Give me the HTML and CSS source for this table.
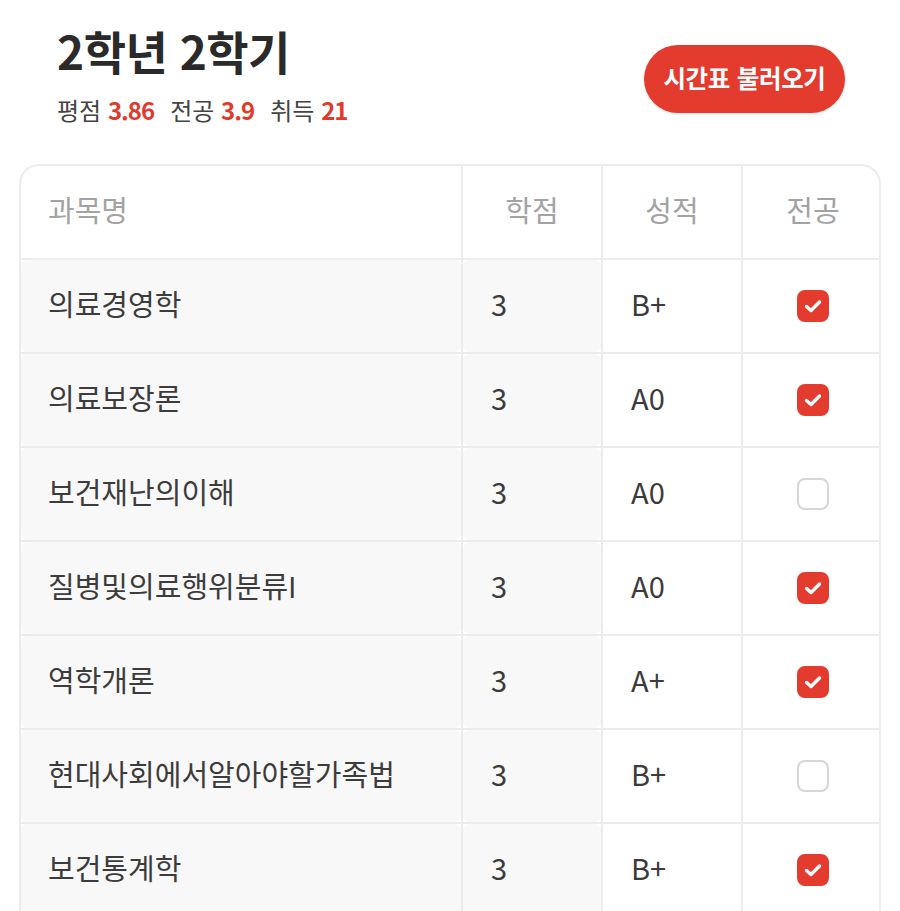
FILE: index.html
```html
<!DOCTYPE html>
<html lang="ko">
<head>
<meta charset="utf-8">
<link rel="stylesheet" href="styles.css">
</head>
<body>
<div class="page">
  <header class="top">
    <div class="summary">
      <h1 class="title">2학년 2학기</h1>
      <div class="stats">
        <span class="stat">평점 <b>3.86</b></span>
        <span class="stat">전공 <b>3.9</b></span>
        <span class="stat">취득 <b>21</b></span>
      </div>
    </div>
    <button class="load-btn">시간표 불러오기</button>
  </header>

  <div class="table">
    <div class="row head">
      <div class="cell name">과목명</div>
      <div class="cell center">학점</div>
      <div class="cell center">성적</div>
      <div class="cell center">전공</div>
    </div>
    <div class="row">
      <div class="cell input"><span class="box">의료경영학</span></div>
      <div class="cell input"><span class="box num">3</span></div>
      <div class="cell grade">B+</div>
      <div class="cell center"><span class="check on"><svg viewBox="0 0 32 32"><polyline points="9.5,16.5 14,20.5 22.5,12"/></svg></span></div>
    </div>
    <div class="row">
      <div class="cell input"><span class="box">의료보장론</span></div>
      <div class="cell input"><span class="box num">3</span></div>
      <div class="cell grade">A0</div>
      <div class="cell center"><span class="check on"><svg viewBox="0 0 32 32"><polyline points="9.5,16.5 14,20.5 22.5,12"/></svg></span></div>
    </div>
    <div class="row">
      <div class="cell input"><span class="box">보건재난의이해</span></div>
      <div class="cell input"><span class="box num">3</span></div>
      <div class="cell grade">A0</div>
      <div class="cell center"><span class="check"></span></div>
    </div>
    <div class="row">
      <div class="cell input"><span class="box">질병및의료행위분류I</span></div>
      <div class="cell input"><span class="box num">3</span></div>
      <div class="cell grade">A0</div>
      <div class="cell center"><span class="check on"><svg viewBox="0 0 32 32"><polyline points="9.5,16.5 14,20.5 22.5,12"/></svg></span></div>
    </div>
    <div class="row">
      <div class="cell input"><span class="box">역학개론</span></div>
      <div class="cell input"><span class="box num">3</span></div>
      <div class="cell grade">A+</div>
      <div class="cell center"><span class="check on"><svg viewBox="0 0 32 32"><polyline points="9.5,16.5 14,20.5 22.5,12"/></svg></span></div>
    </div>
    <div class="row">
      <div class="cell input"><span class="box">현대사회에서알아야할가족법</span></div>
      <div class="cell input"><span class="box num">3</span></div>
      <div class="cell grade">B+</div>
      <div class="cell center"><span class="check"></span></div>
    </div>
    <div class="row">
      <div class="cell input"><span class="box">보건통계학</span></div>
      <div class="cell input"><span class="box num">3</span></div>
      <div class="cell grade">B+</div>
      <div class="cell center"><span class="check on"><svg viewBox="0 0 32 32"><polyline points="9.5,16.5 14,20.5 22.5,12"/></svg></span></div>
    </div>
  </div>
</div>
</body>
</html>
```
FILE: styles.css
```css
html, body {
  margin: 0;
  padding: 0;
  background: #fff;
  height: 911px;
  overflow: hidden;
}
body {
  font-family: "Noto Sans CJK KR", "Noto Sans", sans-serif;
  color: #3c3c3c;
}
.page {
  padding-top: 18px;
}
.top {
  display: flex;
  justify-content: space-between;
  align-items: flex-start;
  padding: 0 55px 0 57px;
  height: 146px;
}
.title {
  margin: 0;
  font-size: 46px;
  font-weight: 700;
  line-height: 64px;
  color: #2a2a2a;
  letter-spacing: -0.5px;
}
.stats {
  margin-top: 11px;
  display: flex;
  gap: 16px;
  font-size: 24px;
  line-height: 34px;
  color: #444;
}
.stat b {
  color: #e03a2d;
  font-weight: 700;
  letter-spacing: -1px;
}
.load-btn {
  margin-top: 27px;
  height: 68px;
  width: 201px;
  border: none;
  border-radius: 34px;
  background: #e33b2d;
  color: #fff;
  font-family: inherit;
  font-size: 24.5px;
  font-weight: 700;
  padding: 0 0 3px;
  letter-spacing: -0.3px;
  box-shadow: 0 1px 3px rgba(0,0,0,0.12);
}
.table {
  margin: 0 19px;
  border: 2px solid #ececec;
  border-bottom: none;
  border-radius: 20px 20px 0 0;
  overflow: hidden;
  background: #ececec;
  display: flex;
  flex-direction: column;
  gap: 2px;
}
.row {
  display: grid;
  grid-template-columns: 440px 138px 138px 140px;
  gap: 2px;
  height: 92px;
}
.cell {
  background: #fff;
  display: flex;
  align-items: center;
  font-size: 29px;
  padding-bottom: 6px;
  box-sizing: border-box;
}
.head .cell {
  color: #a3a3a3;
}
.name {
  padding-left: 27px;
}
.center {
  justify-content: center;
}
.grade {
  padding-left: 28px;
  color: #3c3c3c;
}
.input {
  padding: 0;
  align-items: stretch;
}
.box {
  flex: 1;
  background: #f8f8f8;
  border-radius: 6px;
  display: flex;
  align-items: center;
  padding: 0 0 6px 27px;
  color: #3c3c3c;
}
.box.num {
  padding-left: 28px;
}
.row:not(.head) .center {
  padding-bottom: 0;
}
.check {
  width: 28px;
  height: 28px;
  border: 2px solid #d6d6d6;
  border-radius: 8px;
  display: block;
}
.check.on {
  border-color: #e33b2d;
  background: #e33b2d;
}
.check svg {
  display: block;
  width: 32px;
  height: 32px;
  margin: -2px;
}
.check polyline {
  fill: none;
  stroke: #fff;
  stroke-width: 3.4;
  stroke-linecap: round;
  stroke-linejoin: round;
}
```
